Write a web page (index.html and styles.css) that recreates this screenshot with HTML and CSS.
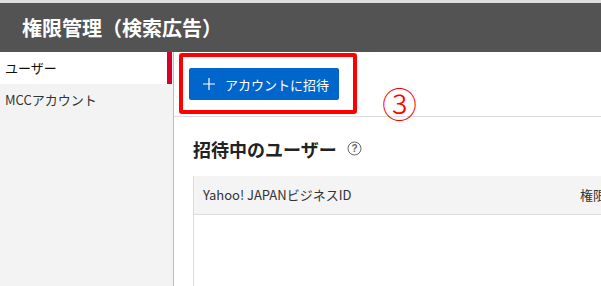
FILE: index.html
```html
<!DOCTYPE html>
<html lang="ja">
  <head>
    <meta charset="utf-8">
    <meta name="viewport" content="width=device-width">
    <title>権限管理（検索広告）</title>
    <link rel="stylesheet" href="styles.css">
  </head>

  <body>
    <header class="page-header">
      <h1>権限管理（検索広告）</h1>
    </header>

    <div class="layout">
      <nav class="side">
        <a class="side-item active" href="#">ユーザー</a>
        <a class="side-item" href="#">MCCアカウント</a>
      </nav>

      <main class="content">
        <div class="toolbar">
          <div class="mark-box">
            <button type="button" class="btn-invite">
              <svg class="plus" width="12" height="12" viewBox="0 0 12 12">
                <path d="M6 0V12M0 6H12" stroke="#fff" stroke-width="1.2"/>
              </svg>
              アカウントに招待
            </button>
          </div>
          <span class="step">③</span>
        </div>

        <section class="invited">
          <h2>
            招待中のユーザー
            <svg class="help" width="15" height="15" viewBox="0 0 15 15">
              <circle cx="7.5" cy="7.5" r="6.5" fill="none" stroke="#666" stroke-width="1"/>
              <text x="7.5" y="11" text-anchor="middle" font-size="10" fill="#666" font-family="Liberation Sans, sans-serif">?</text>
            </svg>
          </h2>

          <table class="user-table">
            <thead>
              <tr>
                <th class="col-id">Yahoo! JAPANビジネスID</th>
                <th>権限</th>
              </tr>
            </thead>
            <tbody>
              <tr><td colspan="2"></td></tr>
            </tbody>
          </table>
        </section>
      </main>
    </div>
  </body>
</html>
```

FILE: styles.css
```css
html, body {
    margin: 0;
    height: 100%;
    overflow: hidden;
}
body {
    font: 13px/1.5 "Noto Sans CJK JP", "Noto Sans", sans-serif;
    color: #333;
    background: #fff;
}
.page-header {
    border-top: 3px solid #dedede;
    background: #535353;
    height: 49px;
    display: flex;
    align-items: center;
    padding-left: 22px;
}
.page-header h1 {
    margin: 0;
    color: #fff;
    font-size: 20px;
    line-height: 24px;
    font-weight: bold;
}
.layout {
    display: flex;
    height: calc(100% - 52px);
}
.side {
    width: 173px;
    flex-shrink: 0;
    background: #f3f3f3;
    border-right: 1px solid #bdbdbd;
    display: flex;
    flex-direction: column;
}
.side-item {
    display: block;
    height: 32px;
    line-height: 32px;
    padding-left: 5px;
    color: #333;
    text-decoration: none;
    font-size: 13px;
}
.side-item.active {
    background: #fff;
    color: #111;
    border-right: 5px solid #d6002a;
    margin-right: 1px;
}
.content {
    flex: 1;
    min-width: 0;
}
.toolbar {
    height: 63px;
    border-bottom: 1px solid #dcdcdc;
    display: flex;
    align-items: flex-start;
    padding: 1px 0 0 5px;
}
.mark-box {
    border: 4px solid #ff0000;
    border-radius: 3px;
    padding: 11px 14px 10px 6px;
}
.btn-invite {
    width: 150px;
    height: 32px;
    background: #0066cc;
    color: #fff;
    border: none;
    border-radius: 2px;
    font: 13px/1 "Noto Sans CJK JP", sans-serif;
    display: flex;
    align-items: center;
    padding: 0 0 0 14px;
    gap: 10px;
}
.step {
    color: #ff0000;
    font-size: 35px;
    font-weight: 300;
    line-height: 35px;
    margin: 32px 0 0 25px;
}
.invited {
    padding: 20px 0 0 19px;
}
.invited h2 {
    margin: 0;
    font-size: 18px;
    line-height: 24px;
    font-weight: bold;
    color: #222;
    display: flex;
    align-items: center;
    gap: 10px;
}
.help {
    margin-top: -2px;
}
.user-table {
    margin-top: 15px;
    width: 600px;
    border-collapse: collapse;
    border-left: 1px solid #dcdcdc;
}
.user-table th {
    background: #f4f4f4;
    border-bottom: 1px solid #dcdcdc;
    height: 38px;
    padding: 0 0 0 9px;
    text-align: left;
    font-weight: normal;
    font-size: 13px;
}
.user-table .col-id {
    width: 368px;
}
.user-table td {
    height: 80px;
}
```
